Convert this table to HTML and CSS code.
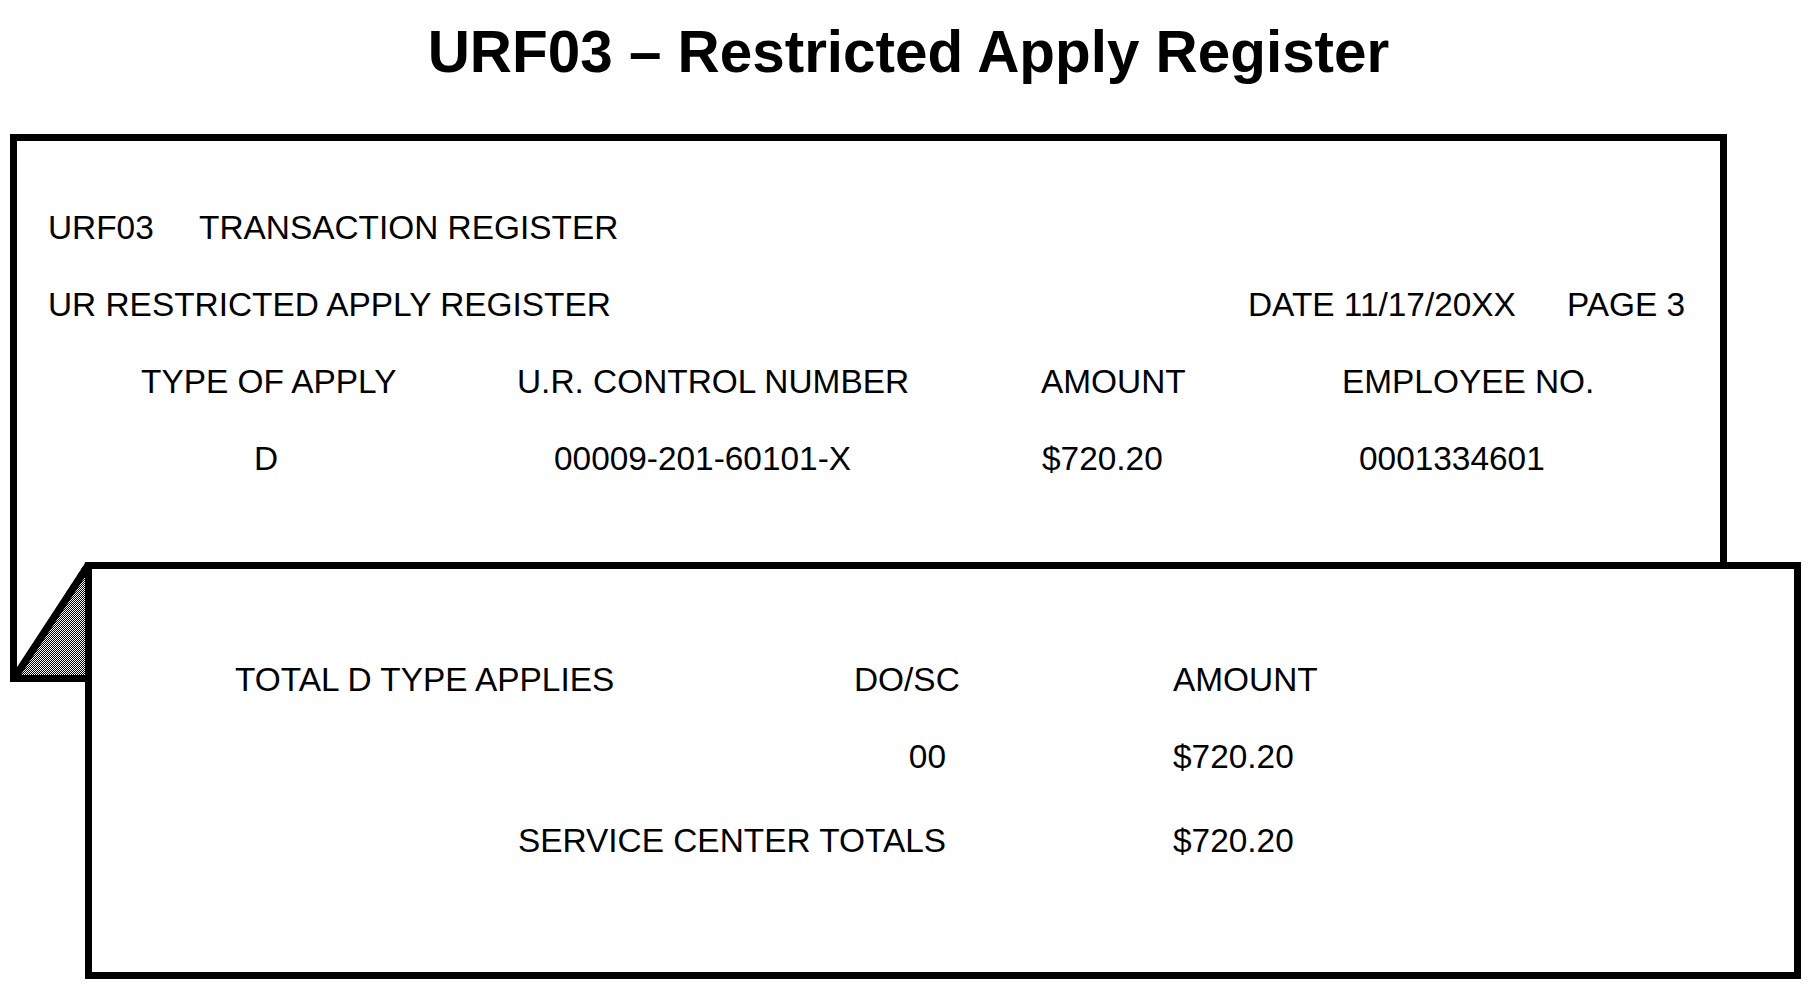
FILE: index.html
```html
<!DOCTYPE html>
<html lang="en">
<head>
<meta charset="utf-8">
<title>URF03 – Restricted Apply Register</title>
<link rel="stylesheet" href="styles.css">
</head>
<body>
<h1 class="title">URF03 – Restricted Apply Register</h1>

<section class="sheet sheet-back">
  <div class="line line-first">
    <span class="code">URF03</span>
    <span>TRANSACTION REGISTER</span>
  </div>
  <div class="line">
    <span class="report-name">UR RESTRICTED APPLY REGISTER</span>
    <span class="date">DATE 11/17/20XX</span>
    <span>PAGE 3</span>
  </div>
  <div class="cols">
    <span>TYPE OF APPLY</span>
    <span>U.R. CONTROL NUMBER</span>
    <span>AMOUNT</span>
    <span>EMPLOYEE NO.</span>
  </div>
  <div class="cols">
    <span class="d-type">D</span>
    <span class="d-ctrl">00009-201-60101-X</span>
    <span class="d-amt">$720.20</span>
    <span class="d-emp">0001334601</span>
  </div>
</section>

<section class="sheet sheet-front">
  <svg class="fold" width="100" height="130" viewBox="0 0 100 130" aria-hidden="true">
    <defs>
      <pattern id="dither" width="2" height="2" patternUnits="userSpaceOnUse">
        <rect width="2" height="2" fill="#ffffff"/>
        <rect x="0" y="0" width="1" height="1" fill="#000000"/>
        <rect x="1" y="1" width="1" height="1" fill="#000000"/>
      </pattern>
    </defs>
    <polygon points="85,8 14,120 85,120" fill="url(#dither)"/>
    <line x1="89" y1="9" x2="15" y2="122" stroke="#000" stroke-width="7.5"/>
  </svg>
  <div class="totals">
    <span class="t-label">TOTAL D TYPE APPLIES</span>
    <span class="t-dosc">DO/SC</span>
    <span class="t-amt">AMOUNT</span>

    <span class="t-right">00</span>
    <span class="t-amt">$720.20</span>

    <span class="t-right t-last">SERVICE CENTER TOTALS</span>
    <span class="t-amt t-last">$720.20</span>
  </div>
</section>
</body>
</html>
```

FILE: styles.css
```css
html, body {
  margin: 0;
  padding: 0;
  background: #ffffff;
}

body {
  font-family: "Liberation Sans", Arial, sans-serif;
  color: #000000;
  width: 1817px;
  height: 990px;
  overflow: hidden;
}

.title {
  margin: 0;
  padding-top: 23px;
  font-size: 58.4px;
  line-height: 58px;
  font-weight: bold;
  text-align: center;
  width: 1817px;
}

.sheet {
  box-sizing: border-box;
  border: 7px solid #000000;
  background: #ffffff;
  font-size: 33.4px;
  line-height: 77px;
  white-space: nowrap;
}

.sheet-back {
  margin: 53px 0 0 10px;
  width: 1717px;
  height: 548px;
  padding-top: 48px;
}

.sheet-front {
  position: relative;
  margin: -120px 0 0 85px;
  width: 1716px;
  height: 417px;
  padding-top: 72px;
}

.line {
  display: flex;
  padding-left: 31px;
}

.code {
  width: 151px;
}

.report-name {
  width: 1200px;
}

.date {
  width: 319px;
}

.cols {
  display: grid;
  grid-template-columns: 376px 524px 301px 1fr;
  padding-left: 124px;
}

.d-type { padding-left: 113px; }
.d-ctrl { padding-left: 37px; }
.d-amt  { padding-left: 1px; }
.d-emp  { padding-left: 17px; }

.fold {
  position: absolute;
  left: -92px;
  top: -14px;
  display: block;
}

.totals {
  display: grid;
  grid-template-columns: 619px 92px 227px 1fr;
  padding-left: 143px;
}

.t-label {
  grid-column: 1;
}

.t-dosc {
  grid-column: 2 / 4;
}

.t-amt {
  grid-column: 4;
}

.t-right {
  grid-column: 1 / 3;
  text-align: right;
}

.t-last {
  margin-top: 7px;
}
```
